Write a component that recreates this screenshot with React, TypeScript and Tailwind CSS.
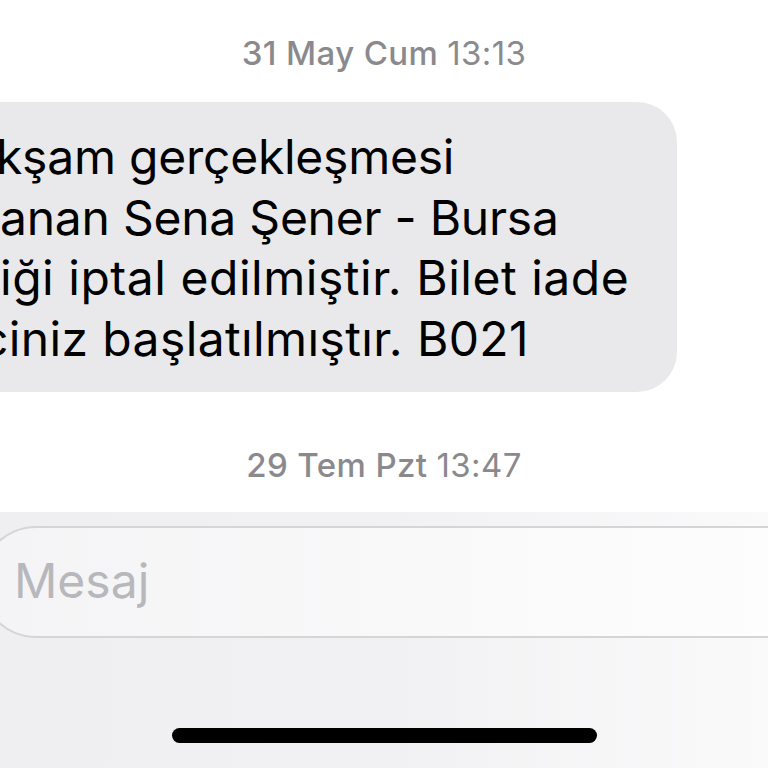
import React from "react";

const font = { fontFamily: "Inter, 'Noto Sans', sans-serif" };

export default function App() {
  return (
    <div
      className="w-[768px] h-[768px] overflow-hidden bg-white flex flex-col"
      style={font}
    >
      <div className="pt-[33px] h-[102px] flex justify-center text-[33px] leading-[40px] text-[#8a8a8e] tracking-[0.012em]">
        <span className="font-medium">31 May Cum</span>
        <span className="ml-[9px]">13:13</span>
      </div>

      <div className="pr-[91px]">
        <div className="-ml-[40px] h-[290px] rounded-[40px] bg-[#e9e9eb] pl-[40px] pt-[25px] text-[48px] leading-[60.7px] text-black whitespace-nowrap tracking-[-0.005em]">
          <div className="-ml-[4px]">kşam gerçekleşmesi</div>
          <div>anan Sena Şener - Bursa</div>
          <div className="tracking-[0.011em]">iği iptal edilmiştir. Bilet iade</div>
          <div className="-ml-[19px] tracking-[0.008em]">ciniz başlatılmıştır. B021</div>
        </div>
      </div>

      <div className="pt-[53px] h-[120px] flex justify-center text-[33px] leading-[40px] text-[#8a8a8e] tracking-[0.012em]">
        <span className="font-medium">29 Tem Pzt</span>
        <span className="ml-[9px]">13:47</span>
      </div>

      <div className="flex-1 flex flex-col bg-gradient-to-r from-[#efeff1] via-[#f1f1f3] to-[#fafafb] pt-[14px]">
        <div className="-ml-[20px] h-[112px] rounded-l-full border-2 border-r-0 border-[#d5d5d8] bg-gradient-to-r from-[#f4f4f6] to-[#fdfdfd] flex items-center pl-[32px]">
          <span className="text-[48px] leading-none text-[#b8b8bc] -mt-[2px]">Mesaj</span>
        </div>
        <div className="flex-1 flex justify-center pt-[90px]">
          <div className="w-[425px] h-[15px] rounded-full bg-black" />
        </div>
      </div>
    </div>
  );
}
